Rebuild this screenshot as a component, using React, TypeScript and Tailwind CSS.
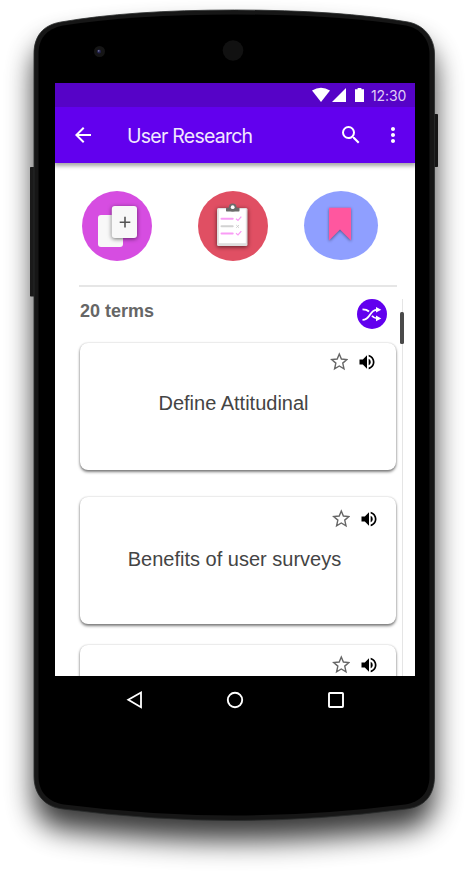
import React from "react";
import { MdArrowBack, MdSearch, MdMoreVert, MdVolumeUp } from "react-icons/md";

function DeviceFrame() {
  const outer =
    "M34 54 C34 36 43 25 61 22 Q130 10 234.5 10 Q339 10 408 22 C424 25 434.5 38 434.5 54 V776 C434.5 796 424 807 406 809 Q318 820.5 234.5 820.5 Q151 820.5 63 809 C46 807 34 796 34 776 Z";
  const inner =
    "M38.500 54 C38.500 39 46 29 63 25.500 Q134 14.500 234.500 14.500 Q335 14.500 406 25.500 C421 28.500 429.500 40 429.500 54 V776 C429.500 792 421 802 405 804.500 Q318 815.500 234.500 815.500 Q151 815.500 64 804.500 C48 802 38.500 792 38.500 776 Z";
  return (
    <svg className="absolute inset-0" width="469" height="884" viewBox="0 0 469 884" aria-hidden="true">
      <defs>
        <filter id="soft" x="-20%" y="-20%" width="140%" height="140%" colorInterpolationFilters="sRGB">
          <feGaussianBlur stdDeviation="14" />
        </filter>
      </defs>
      <path d={outer} transform="translate(0 20)" fill="#000" opacity="0.78" filter="url(#soft)" />
      <rect x="30" y="167" width="6" height="129.500" rx="0.700" fill="#1a1a1a" />
      <rect x="433" y="114" width="5" height="53" rx="0.700" fill="#151515" />
      <path d={outer} fill="#161616" stroke="#2a2c2c" strokeWidth="0.800" />
      <path d={inner} fill="#000" />
      <circle cx="99.500" cy="51.500" r="5.500" fill="#151515" />
      <circle cx="99" cy="51.500" r="2" fill="#22224f" />
      <circle cx="98.700" cy="50.800" r="0.900" fill="#77779a" />
      <circle cx="233" cy="50.500" r="10.300" fill="#111" />
    </svg>
  );
}

function StatusBar() {
  return (
    <div className="relative z-20 flex h-6 shrink-0 items-center bg-[#5603c7] pl-[257px] text-white">
      <svg width="54" height="24" viewBox="0 0 54 24" fill="#fff">
        <path d="M0 7.500 Q9 2 18 7.500 L9 19 Z" />
        <path d="M20 19 L34 5 V19 Z" />
        <path d="M43 6.200 h2.600 V5 h3.800 v1.200 H52 V19 h-9 Z" />
      </svg>
      <span className="ml-[5px] mt-[2px] font-['Inter',sans-serif] text-[14px] leading-6 tracking-[-0.1px] text-[#e0cff6]">12:30</span>
    </div>
  );
}

function AppBar() {
  return (
    <header className="z-10 flex h-14 shrink-0 items-center bg-[#6200ee] pl-4 text-white shadow-[0_2px_4px_1px_rgba(0,0,0,0.35)]">
      <MdArrowBack size={24} />
      <h1 className="ml-8 mt-[2px] w-[212px] whitespace-nowrap font-['Inter',sans-serif] text-[19.5px] leading-6 tracking-[-0.75px] text-[#f1e8fd]">
        User Research
      </h1>
      <MdSearch size={24} />
      <MdMoreVert size={24} className="ml-[18px]" />
    </header>
  );
}

function AddCardsButton() {
  return (
    <button className="block h-[70px] w-[70px] rounded-full bg-[#d64de1]">
      <svg width="70" height="70" viewBox="0 0 70 70">
        <rect x="16" y="24" width="25" height="32" rx="3" fill="#f8f8f8" />
        <rect x="29.800" y="15" width="25.200" height="32" rx="3" fill="#f8f8f8" className="drop-shadow-[0_1px_2px_rgba(0,0,0,0.55)]" />
        <path d="M43 25.800 V36.500 M37.700 31.200 H48.300" stroke="#555" strokeWidth="1.600" />
      </svg>
    </button>
  );
}

function ChecklistButton() {
  return (
    <button className="block h-[70px] w-[70px] rounded-full bg-[#e04f63]">
      <svg width="70" height="70" viewBox="0 0 70 70" fill="none">
        <rect x="19" y="17" width="30.500" height="38" rx="1.500" fill="#dedede" className="drop-shadow-[0_1px_2px_rgba(0,0,0,0.6)]" />
        <rect x="20.800" y="18.200" width="27" height="34" fill="#fff" />
        <rect x="28" y="16.800" width="13.500" height="3.600" rx="0.600" fill="#6b6b6b" />
        <circle cx="34.700" cy="16.500" r="3.900" fill="#6b6b6b" />
        <circle cx="34.700" cy="16.200" r="1.900" fill="#fff" />
        <path d="M23.500 27.700 H34.700 M23.500 42.400 H34.700" stroke="#f99cf5" strokeWidth="2" strokeLinecap="round" />
        <path d="M23.500 35.200 H34.700" stroke="#d2d2d2" strokeWidth="2" strokeLinecap="round" />
        <path d="M38 27.800 L40 29.500 L43.300 25.600 M38 42.300 L40 44 L43.300 40.100" stroke="#f99cf5" strokeWidth="1.200" />
        <path d="M38.200 34 L41 36.800 M41 34 L38.200 36.800" stroke="#ccc" strokeWidth="0.900" />
      </svg>
    </button>
  );
}

function BookmarkButton() {
  return (
    <button className="block h-[69px] w-[74px] rounded-[50%] bg-[#8f9fff]">
      <svg width="74" height="69" viewBox="0 0 74 69">
        <path d="M25 16.700 H47 V49.500 L36 38.500 L25 49.500 Z" fill="#ff579f" className="drop-shadow-[0_1px_1.500px_rgba(0,0,0,0.45)]" />
      </svg>
    </button>
  );
}

function ShuffleButton() {
  return (
    <button className="block h-[30px] w-[30px] rounded-full bg-[#6200ee]">
      <svg width="30" height="30" viewBox="0 0 30 30" fill="none" stroke="#fff" strokeWidth="1.800">
        <path d="M5.500 20.800 C14 20.800 12 10.800 20 10.800" />
        <path d="M5.500 10.300 C9 10.300 10.500 11 12 12.500" />
        <path d="M15 16.800 C16.500 18.800 18 19.400 20 19.400" />
        <path d="M19 8 L24.300 10.800 L19 13.600 Z M19 16.600 L24.300 19.400 L19 22.200 Z" fill="#fff" stroke="none" />
      </svg>
    </button>
  );
}

function StarIcon() {
  return (
    <svg width="18" height="19" viewBox="0 0 18 19" fill="none" stroke="#666" strokeWidth="1.400">
      <path d="M9.300 2 L11.400 7 L16.900 7.500 L12.750 11.100 L14 16.900 L9.300 14 L4.600 16.900 L5.850 11.100 L1.700 7.500 L7.200 7 Z" />
    </svg>
  );
}

const layouts = {
  first: { icons: "flex justify-end gap-[9px] pr-[19px] pt-[9px]", text: "mt-[17px] pr-[9px]" },
  middle: { icons: "flex justify-end gap-[9px] pr-[17px] pt-[12px]", text: "mt-[16px] pr-[7px]" },
  last: { icons: "flex justify-end gap-[9px] pr-[17px] pt-[10px]", text: "mt-[16px]" },
};

function TermCard({ term, layout }: { term?: string; layout: keyof typeof layouts }) {
  return (
    <article className="h-[127px] w-[316px] shrink-0 rounded-lg bg-white shadow-[0_2px_3px_rgba(0,0,0,0.5),0_0_2px_rgba(0,0,0,0.22)]">
      <div className={layouts[layout].icons}>
        <StarIcon />
        <MdVolumeUp size={20} color="#000" />
      </div>
      {term && <p className={`${layouts[layout].text} text-center text-[20px] leading-7 text-[#444]`}>{term}</p>}
    </article>
  );
}

function NavBar() {
  return (
    <nav className="flex h-12 items-center gap-[76px] pl-[122px]">
      <svg width="24" height="24" viewBox="0 0 24 24" fill="none" stroke="#fff" strokeWidth="1.800">
        <path d="M19 4.500 V19.200 L6.300 11.800 Z" />
      </svg>
      <svg width="24" height="24" viewBox="0 0 24 24" fill="none" stroke="#fff" strokeWidth="1.900">
        <circle cx="13" cy="12" r="7.200" />
      </svg>
      <svg width="24" height="24" viewBox="0 0 24 24" fill="none" stroke="#fff" strokeWidth="1.900">
        <rect x="7" y="5" width="14" height="14" rx="0.800" />
      </svg>
    </nav>
  );
}

export default function App() {
  return (
    <div className="relative h-[884px] w-[469px] overflow-hidden bg-white font-['Liberation_Sans',sans-serif]">
      <DeviceFrame />
      <div className="relative flex h-full flex-col pt-[83px]">
        <main className="ml-[55px] flex h-[593px] w-[360px] shrink-0 flex-col overflow-hidden bg-white">
          <StatusBar />
          <AppBar />
          <section className="flex shrink-0 items-start pl-[27px] pt-7">
            <AddCardsButton />
            <div className="ml-[46px]">
              <ChecklistButton />
            </div>
            <div className="ml-9">
              <BookmarkButton />
            </div>
          </section>
          <hr className="ml-6 mt-[24px] h-[2px] w-[318px] shrink-0 border-0 bg-[#e6e6e6]" />
          <section className="mt-[12px] flex min-h-0 flex-1 pl-[25px]">
            <div className="flex w-[316px] flex-col">
              <div className="flex h-11 shrink-0 items-start justify-between pr-[9px]">
                <h2 className="text-[18px] font-bold leading-6 text-[#666]">20 terms</h2>
                <ShuffleButton />
              </div>
              <div className="flex flex-col">
                <TermCard term="Define Attitudinal" layout="first" />
                <div className="mt-[27px]">
                  <TermCard term="Benefits of user surveys" layout="middle" />
                </div>
                <div className="mt-[21px]">
                  <TermCard layout="last" />
                </div>
              </div>
            </div>
            <div className="ml-1 flex w-1 flex-col items-center">
              <div className="h-[13px] w-px bg-[#e5e5e5]" />
              <div className="h-8 w-1 shrink-0 rounded-[1.5px] bg-[#4a4a4a]" />
              <div className="w-px flex-1 bg-[#e5e5e5]" />
            </div>
          </section>
        </main>
        <NavBar />
      </div>
    </div>
  );
}
